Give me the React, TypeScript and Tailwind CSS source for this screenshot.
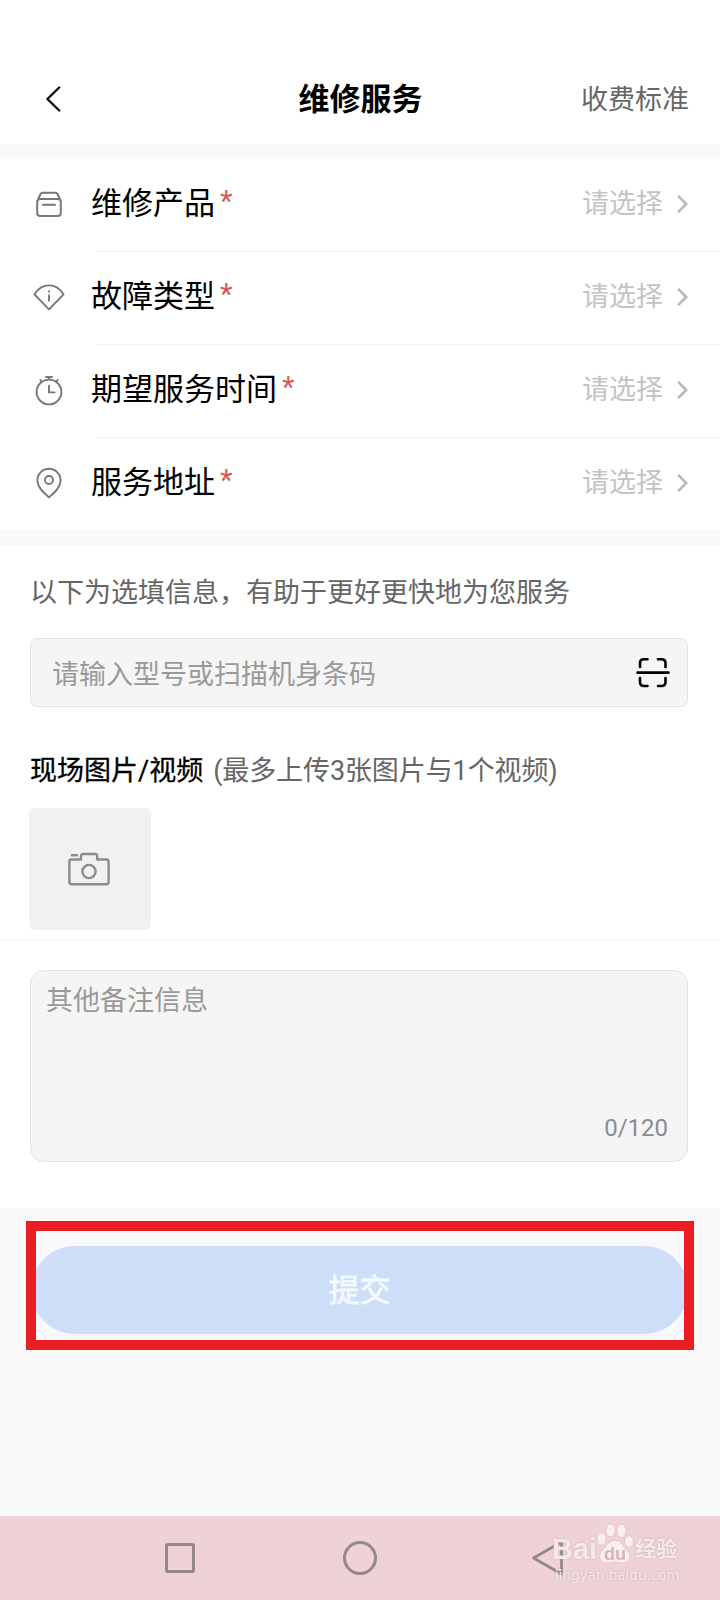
import type { ReactNode } from 'react';

interface FormRowProps {
  icon: ReactNode;
  label: string;
  last?: boolean;
}

function BoxIcon() {
  return (
    <svg width="32" height="32" viewBox="0 0 32 32" fill="none" stroke="#777" strokeWidth="2" strokeLinejoin="round">
      <rect x="4.2" y="10" width="23.6" height="17" rx="3" />
      <path d="M5 10 7.6 5Q8.2 3.8 9.6 3.8H22.4Q23.8 3.8 24.4 5L27 10" />
      <path d="M10 15.8H22" strokeLinecap="round" />
    </svg>
  );
}

function FaultIcon() {
  return (
    <svg width="32" height="32" viewBox="0 0 32 32" fill="none" stroke="#777" strokeWidth="1.9" strokeLinejoin="round">
      <path d="M1.4 12.4Q7 3.4 16 3.4T30.6 12.4L16 27.4Z" />
      <path d="M16 12.5V19.5M16 8.6V10.6" />
    </svg>
  );
}

function TimerIcon() {
  return (
    <svg width="32" height="32" viewBox="0 0 32 32" fill="none" stroke="#777" strokeWidth="1.9" strokeLinecap="round">
      <circle cx="16" cy="17" r="12.4" />
      <path d="M16 10.6V17.4H21.6" />
      <path d="M13 2H19M16 2V4M7.3 5 8.3 6.2M24.7 5 23.7 6.2" />
    </svg>
  );
}

function PinIcon() {
  return (
    <svg width="32" height="32" viewBox="0 0 32 32" fill="none" stroke="#777" strokeWidth="1.9" strokeLinejoin="round">
      <path d="M16 30.4C9 24 4.4 19.6 4.4 13.4A11.6 11.6 0 0 1 27.6 13.4C27.6 19.6 23 24 16 30.4Z" />
      <circle cx="16" cy="13" r="4" />
    </svg>
  );
}

function FormRow({ icon, label, last }: FormRowProps) {
  return (
    <div className={`flex pl-[33px] ${last ? 'h-[92px]' : 'h-[93px]'}`}>
      <div className="flex w-[63px] shrink-0 items-center pb-[2px]">{icon}</div>
      <div className={`flex flex-1 items-center pr-[32px] pb-[2px] ${last ? '' : 'border-b border-[#f0f0f0]'}`}>
        <span className="-ml-[5px] text-[31px] leading-[44px] text-black">{label}</span>
        <span className="mb-[7px] ml-[5px] text-[29px] leading-[44px] text-[#d25a50]">*</span>
        <span className="ml-auto text-[27px] leading-[40px] text-[#c3c3c3]">请选择</span>
        <svg className="ml-[14px]" width="11" height="20" viewBox="0 0 11 20" fill="none" stroke="#b8b8b8" strokeWidth="2.6">
          <path d="M1.2 1.8 9.2 10 1.2 18.2" />
        </svg>
      </div>
    </div>
  );
}

function Watermark() {
  return (
    <div className="absolute top-[5px] left-[552px] w-[136px] text-[#fbf2f4]/90">
      <div className="flex h-[44px] items-end">
        <span className="font-['Liberation_Sans'] text-[29px] leading-[31px] font-bold [text-shadow:0_0_2px_#c9a4aa]">Bai</span>
        <svg className="mb-[1px] -ml-[1px] shrink-0" width="38" height="42" viewBox="0 0 38 42" fill="currentColor" stroke="#d9b9be" strokeWidth="0.6">
          <ellipse cx="5.6" cy="17" rx="4.6" ry="6.2" />
          <ellipse cx="14.4" cy="8.4" rx="4.6" ry="6.6" />
          <ellipse cx="25.6" cy="8.8" rx="4.6" ry="6.6" />
          <ellipse cx="33" cy="19.6" rx="4.4" ry="5.8" />
          <path d="M19 18.4C26 18.4 27 25 31 28.6C36 33.4 34 41 27 41C23 41 22 40 19 40S14 41 10 41C3 41 1.6 33 6.4 28.6C11 24.6 12 18.4 19 18.4Z" />
          <text x="19" y="37.5" textAnchor="middle" fontFamily="Liberation Sans" fontWeight="700" fontSize="18" fill="#d8b3b9" stroke="none">
            du
          </text>
        </svg>
        <span className="mb-[-1px] ml-[1px] text-[21px] leading-[34px] font-bold [text-shadow:0_0_2px_#c9a4aa]">经验</span>
      </div>
      <div className="ml-[3px] font-['DejaVu_Sans'] text-[13.5px] leading-[20px] [text-shadow:0_0_2px_#c9a4aa]">jingyan.baidu.com</div>
    </div>
  );
}

export default function App() {
  return (
    <div className="flex h-[1600px] w-[720px] flex-col overflow-hidden bg-[#f9f9f9] font-[Roboto,'Noto_Sans_CJK_SC',sans-serif]">
      {/* Header */}
      <header className="grid h-[144px] shrink-0 grid-cols-3 items-center bg-white pt-[56px] pr-[31px] pl-[45px]">
        <svg className="mb-[2px]" width="16" height="26" viewBox="0 0 16 26" fill="none" stroke="#111" strokeWidth="2.4" strokeLinecap="round" strokeLinejoin="round">
          <path d="M14.2 1.5 2.4 13 14.2 24.5" />
        </svg>
        <h1 className="-ml-[13px] text-center text-[31px] leading-[44px] font-bold text-black">维修服务</h1>
        <span className="text-right text-[27px] leading-[40px] text-[#666]">收费标准</span>
      </header>

      {/* Required fields */}
      <section className="mt-[15px] shrink-0 bg-white">
        <FormRow icon={<BoxIcon />} label="维修产品" />
        <FormRow icon={<FaultIcon />} label="故障类型" />
        <FormRow icon={<TimerIcon />} label="期望服务时间" />
        <FormRow icon={<PinIcon />} label="服务地址" last />
      </section>

      {/* Optional fields */}
      <section className="mt-[16px] h-[662px] shrink-0 bg-white">
        <div className="px-[30px] pt-[27px]">
          <p className="text-[27px] leading-[40px] text-[#666]">以下为选填信息，有助于更好更快地为您服务</p>
          <div className="mt-[25px] flex h-[69px] w-[658px] items-center justify-between rounded-[7px] border border-[#e3e3e3] bg-[#f5f5f5] pr-[17px] pl-[21px]">
            <span className="pt-[4px] text-[27px] leading-[40px] text-[#999]">请输入型号或扫描机身条码</span>
            <svg width="34" height="32" viewBox="0 0 34 32" fill="none" stroke="#000" strokeWidth="2.6" strokeLinecap="round">
              <path d="M1.5 15.6H32.5" />
              <path d="M4 10V6Q4 2.2 8 2.2H11.5M22 2.2H25.5Q29.5 2.2 29.5 6V10M4 21V25Q4 29 8 29H11.5M22 29H25.5Q29.5 29 29.5 25V21" />
            </svg>
          </div>
          <div className="mt-[44px] flex text-[27px] leading-[40px] whitespace-pre text-[#666]">
            <span className="text-black [-webkit-text-stroke:0.3px]">现场图片/视频</span>
            <span className="ml-[10px] tracking-[-0.1px]">(最多上传3张图片与1个视频)</span>
          </div>
          <div className="mt-[17px] -ml-[1px] flex size-[122px] items-center justify-center rounded-[6px] bg-[#f1f1f1]">
            <svg className="mr-[2px]" width="42" height="34" viewBox="0 0 42 34" fill="none" stroke="#8c8c8c" strokeWidth="2.4" strokeLinejoin="round">
              <path d="M3.2 7.5H13V4.2Q13 2 15.2 2H27Q29.2 2 29.2 4.2V7.5H38.4Q40.6 7.5 40.6 9.7V30Q40.6 32.2 38.4 32.2H3.6Q1.4 32.2 1.4 30V9.5Q1.4 7.5 3.2 7.5Z" />
              <path d="M3 3.2H10" />
              <circle cx="21" cy="19.5" r="6.6" />
            </svg>
          </div>
        </div>
        <div className="mt-[9px] border-t border-[#f6f6f6] px-[30px] pt-[30px]">
          <div className="flex h-[192px] w-[658px] flex-col justify-between rounded-[14px] border border-[#e3e3e3] bg-[#f5f5f5] pt-[10px] pr-[19px] pb-[17px] pl-[15px]">
            <span className="text-[27px] leading-[40px] text-[#999]">其他备注信息</span>
            <span className="text-right text-[24px] leading-[32px] text-[#8c8c8c]">0/120</span>
          </div>
        </div>
      </section>

      {/* Submit, framed by the highlight */}
      <div className="mt-[13px] ml-[26px] h-[129px] w-[668px] shrink-0 overflow-hidden border-[10px] border-[#eb1c24] pt-[15px]">
        <button className="-ml-[5px] h-[88px] w-[657px] rounded-full bg-[#cfdef8] pt-[2px] text-[31px] text-[#f3faff] [-webkit-text-stroke:0.8px]">
          提交
        </button>
      </div>

      {/* System navigation */}
      <nav className="relative mt-auto flex h-[84px] shrink-0 bg-[#eed2d6] pt-[24px] pl-[165px]">
        <div className="mt-[3px] size-[30px] rounded-[3px] border-[3px] border-[#948888]" />
        <div className="mt-[1px] ml-[148px] size-[34px] rounded-full border-[3px] border-[#948888]" />
        <svg className="ml-[154px]" width="34" height="36" viewBox="0 0 34 36" fill="none" stroke="#948888" strokeWidth="2.8" strokeLinejoin="round">
          <path d="M30.500 2V34L2.500 18Z" />
        </svg>
        <Watermark />
      </nav>
    </div>
  );
}
